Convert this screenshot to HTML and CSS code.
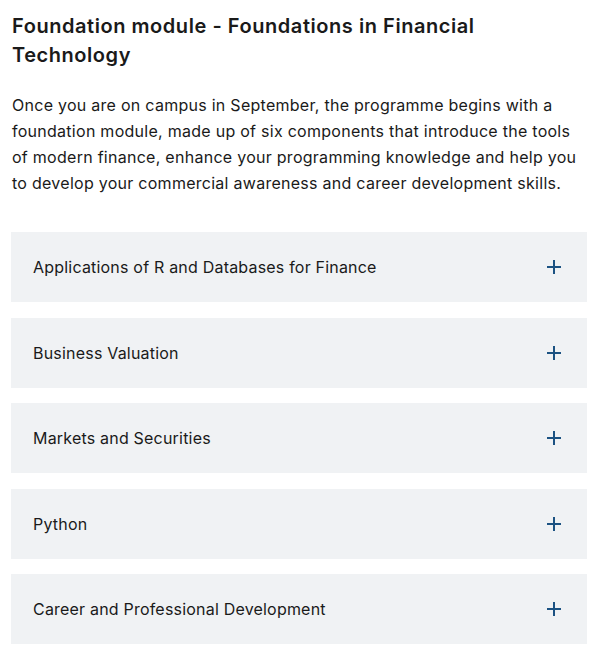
FILE: index.html
```html
<!DOCTYPE html>
<html lang="en">
<head>
  <meta charset="UTF-8">
  <meta name="viewport" content="width=device-width, initial-scale=1.0">
  <title>Foundation module</title>
  <link rel="stylesheet" href="styles.css">
</head>
<body>
  <section class="module">
    <h2>Foundation module - Foundations in Financial Technology</h2>
    <p class="intro">Once you are on campus in September, the programme begins with a foundation module, made up of six components that introduce the tools of modern finance, enhance your programming knowledge and help you to develop your commercial awareness and career development skills.</p>

    <div class="accordion">
      <div class="acc-item">
        <span>Applications of R and Databases for Finance</span>
        <span class="plus"></span>
      </div>
      <div class="acc-item">
        <span>Business Valuation</span>
        <span class="plus"></span>
      </div>
      <div class="acc-item">
        <span>Markets and Securities</span>
        <span class="plus"></span>
      </div>
      <div class="acc-item">
        <span>Python</span>
        <span class="plus"></span>
      </div>
      <div class="acc-item">
        <span>Career and Professional Development</span>
        <span class="plus"></span>
      </div>
    </div>
  </section>
</body>
</html>
```

FILE: styles.css
```css
body {
  margin: 0;
  font-family: Inter, "Liberation Sans", Arial, sans-serif;
  color: #1a1a1a;
  background: #fff;
}

.module {
  padding: 12px 13px 0 11px;
}

.module h2 {
  margin: 0 0 0 1px;
  font-size: 20px;
  line-height: 29px;
  font-weight: 600;
  letter-spacing: 0.55px;
  color: #1a1a1a;
  max-width: 500px;
}

.intro {
  margin: 22px 0 36px 1px;
  font-size: 16px;
  line-height: 26px;
  letter-spacing: 0.27px;
}

.accordion {
  display: flex;
  flex-direction: column;
  gap: 15.5px;
}

.acc-item {
  display: flex;
  align-items: center;
  justify-content: space-between;
  height: 70px;
  padding: 0 26px 0 22px;
  background: #f0f2f4;
  font-size: 16px;
  letter-spacing: 0.2px;
}

.plus {
  position: relative;
  width: 14px;
  height: 14px;
}

.plus::before,
.plus::after {
  content: "";
  position: absolute;
  background: #1c5282;
}

.plus::before {
  left: 0;
  top: 6px;
  width: 14px;
  height: 2px;
}

.plus::after {
  left: 6px;
  top: 0;
  width: 2px;
  height: 14px;
}
```
